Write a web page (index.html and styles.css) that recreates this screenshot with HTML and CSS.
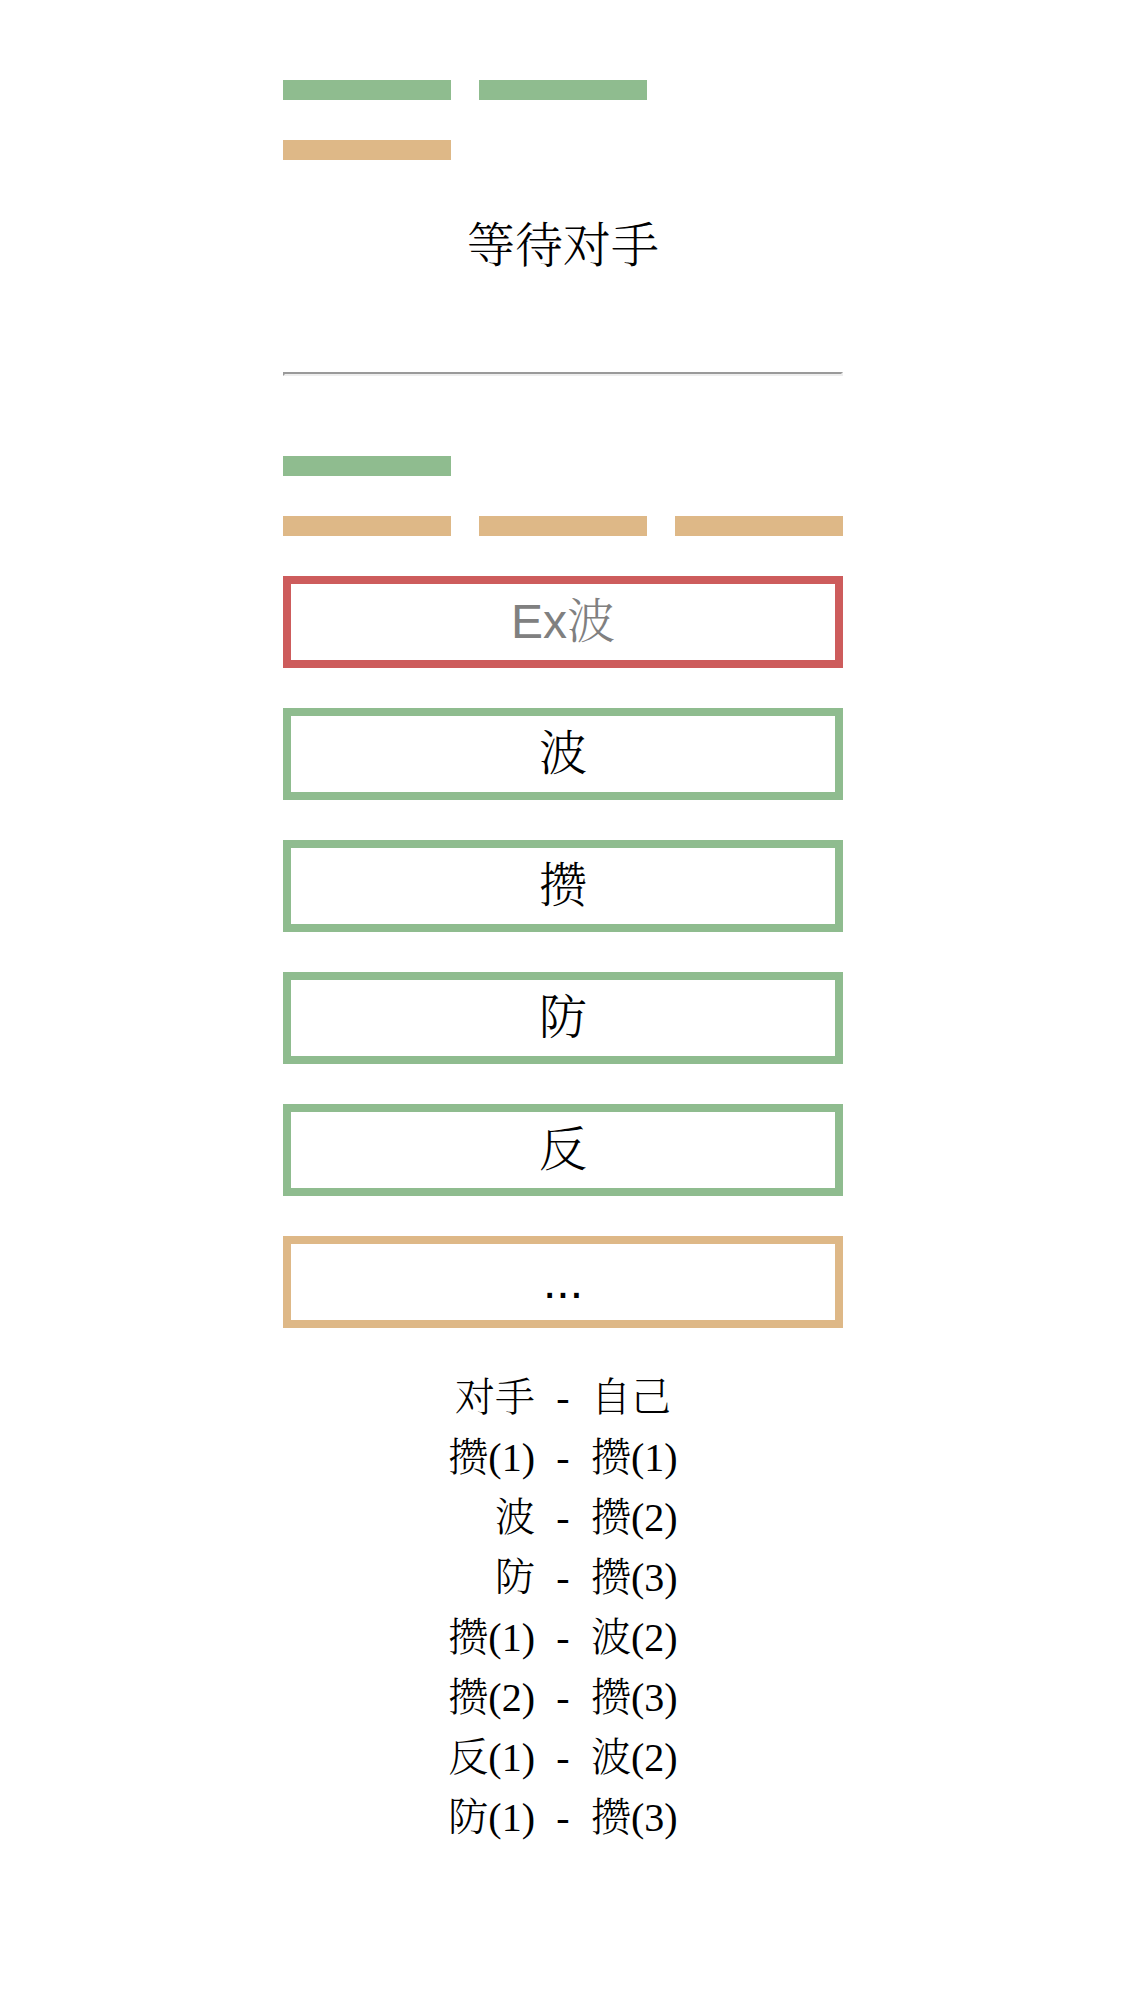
FILE: index.html
```html
<!DOCTYPE html>
<html lang="zh-CN">
<head>
<meta charset="utf-8">
<meta name="viewport" content="width=device-width, initial-scale=1">
<title>波攒防</title>
<link rel="stylesheet" href="styles.css">
</head>
<body>
<main class="game">
  <section class="player">
    <div class="bars bars-life"><span class="bar"></span><span class="bar"></span></div>
    <div class="bars bars-energy"><span class="bar"></span></div>
    <p class="status">等待对手</p>
  </section>
  <hr class="divider">
  <section class="player">
    <div class="bars bars-life"><span class="bar"></span></div>
    <div class="bars bars-energy"><span class="bar"></span><span class="bar"></span><span class="bar"></span></div>
    <button class="move move-off" type="button" disabled>Ex波</button>
    <button class="move" type="button">波</button>
    <button class="move" type="button">攒</button>
    <button class="move" type="button">防</button>
    <button class="move" type="button">反</button>
    <button class="move move-more" type="button">...</button>
  </section>
  <table class="log">
    <thead>
      <tr><th scope="col">对手</th><td>-</td><th scope="col">自己</th></tr>
    </thead>
    <tbody>
      <tr><td>攒(1)</td><td>-</td><td>攒(1)</td></tr>
      <tr><td>波</td><td>-</td><td>攒(2)</td></tr>
      <tr><td>防</td><td>-</td><td>攒(3)</td></tr>
      <tr><td>攒(1)</td><td>-</td><td>波(2)</td></tr>
      <tr><td>攒(2)</td><td>-</td><td>攒(3)</td></tr>
      <tr><td>反(1)</td><td>-</td><td>波(2)</td></tr>
      <tr><td>防(1)</td><td>-</td><td>攒(3)</td></tr>
    </tbody>
  </table>
</main>
</body>
</html>
```
FILE: styles.css
```css
* {
  box-sizing: border-box;
}

body {
  margin: 0;
  background: #fff;
  color: #000;
  font-family: "Liberation Serif", "AR PL UMing CN", "SimSun", "Noto Serif CJK SC", "Noto Sans CJK SC", serif;
  font-weight: 300;
}

.game {
  max-width: 560px;
  margin: 0 auto;
  padding: 80px 0;
}

.player {
  display: flex;
  flex-direction: column;
  gap: 40px;
}

.bars {
  display: grid;
  grid-template-columns: repeat(3, 1fr);
  gap: 28px;
}

.bar {
  height: 20px;
}

.bars-life .bar {
  background: darkseagreen;
}

.bars-energy .bar {
  background: burlywood;
}

.status {
  margin: 0;
  font-size: 48px;
  line-height: 92px;
  text-align: center;
}

.divider {
  margin: 80px 0;
  border: 2px solid;
  border-color: #9a9a9a #eee #eee #9a9a9a;
}

.move {
  width: 100%;
  padding: 8px;
  border: 8px solid darkseagreen;
  background: transparent;
  color: #000;
  font-family: "Liberation Sans", "AR PL UMing CN", "SimSun", "Noto Serif CJK SC", "Noto Sans CJK SC", sans-serif;
  font-size: 48px;
  font-weight: 300;
  line-height: 60px;
  text-align: center;
  cursor: pointer;
}

.move-off {
  border-color: indianred;
  color: gray;
  cursor: default;
}

.move-more {
  border-color: burlywood;
}

.log {
  width: 100%;
  margin-top: 40px;
  border-collapse: collapse;
  table-layout: fixed;
  font-size: 40px;
  line-height: 60px;
}

.log th,
.log td {
  padding: 0;
  font-weight: inherit;
  text-align: left;
}

.log tr > :first-child {
  text-align: right;
}

.log tr > :nth-child(2) {
  width: 56px;
  text-align: center;
}
```
